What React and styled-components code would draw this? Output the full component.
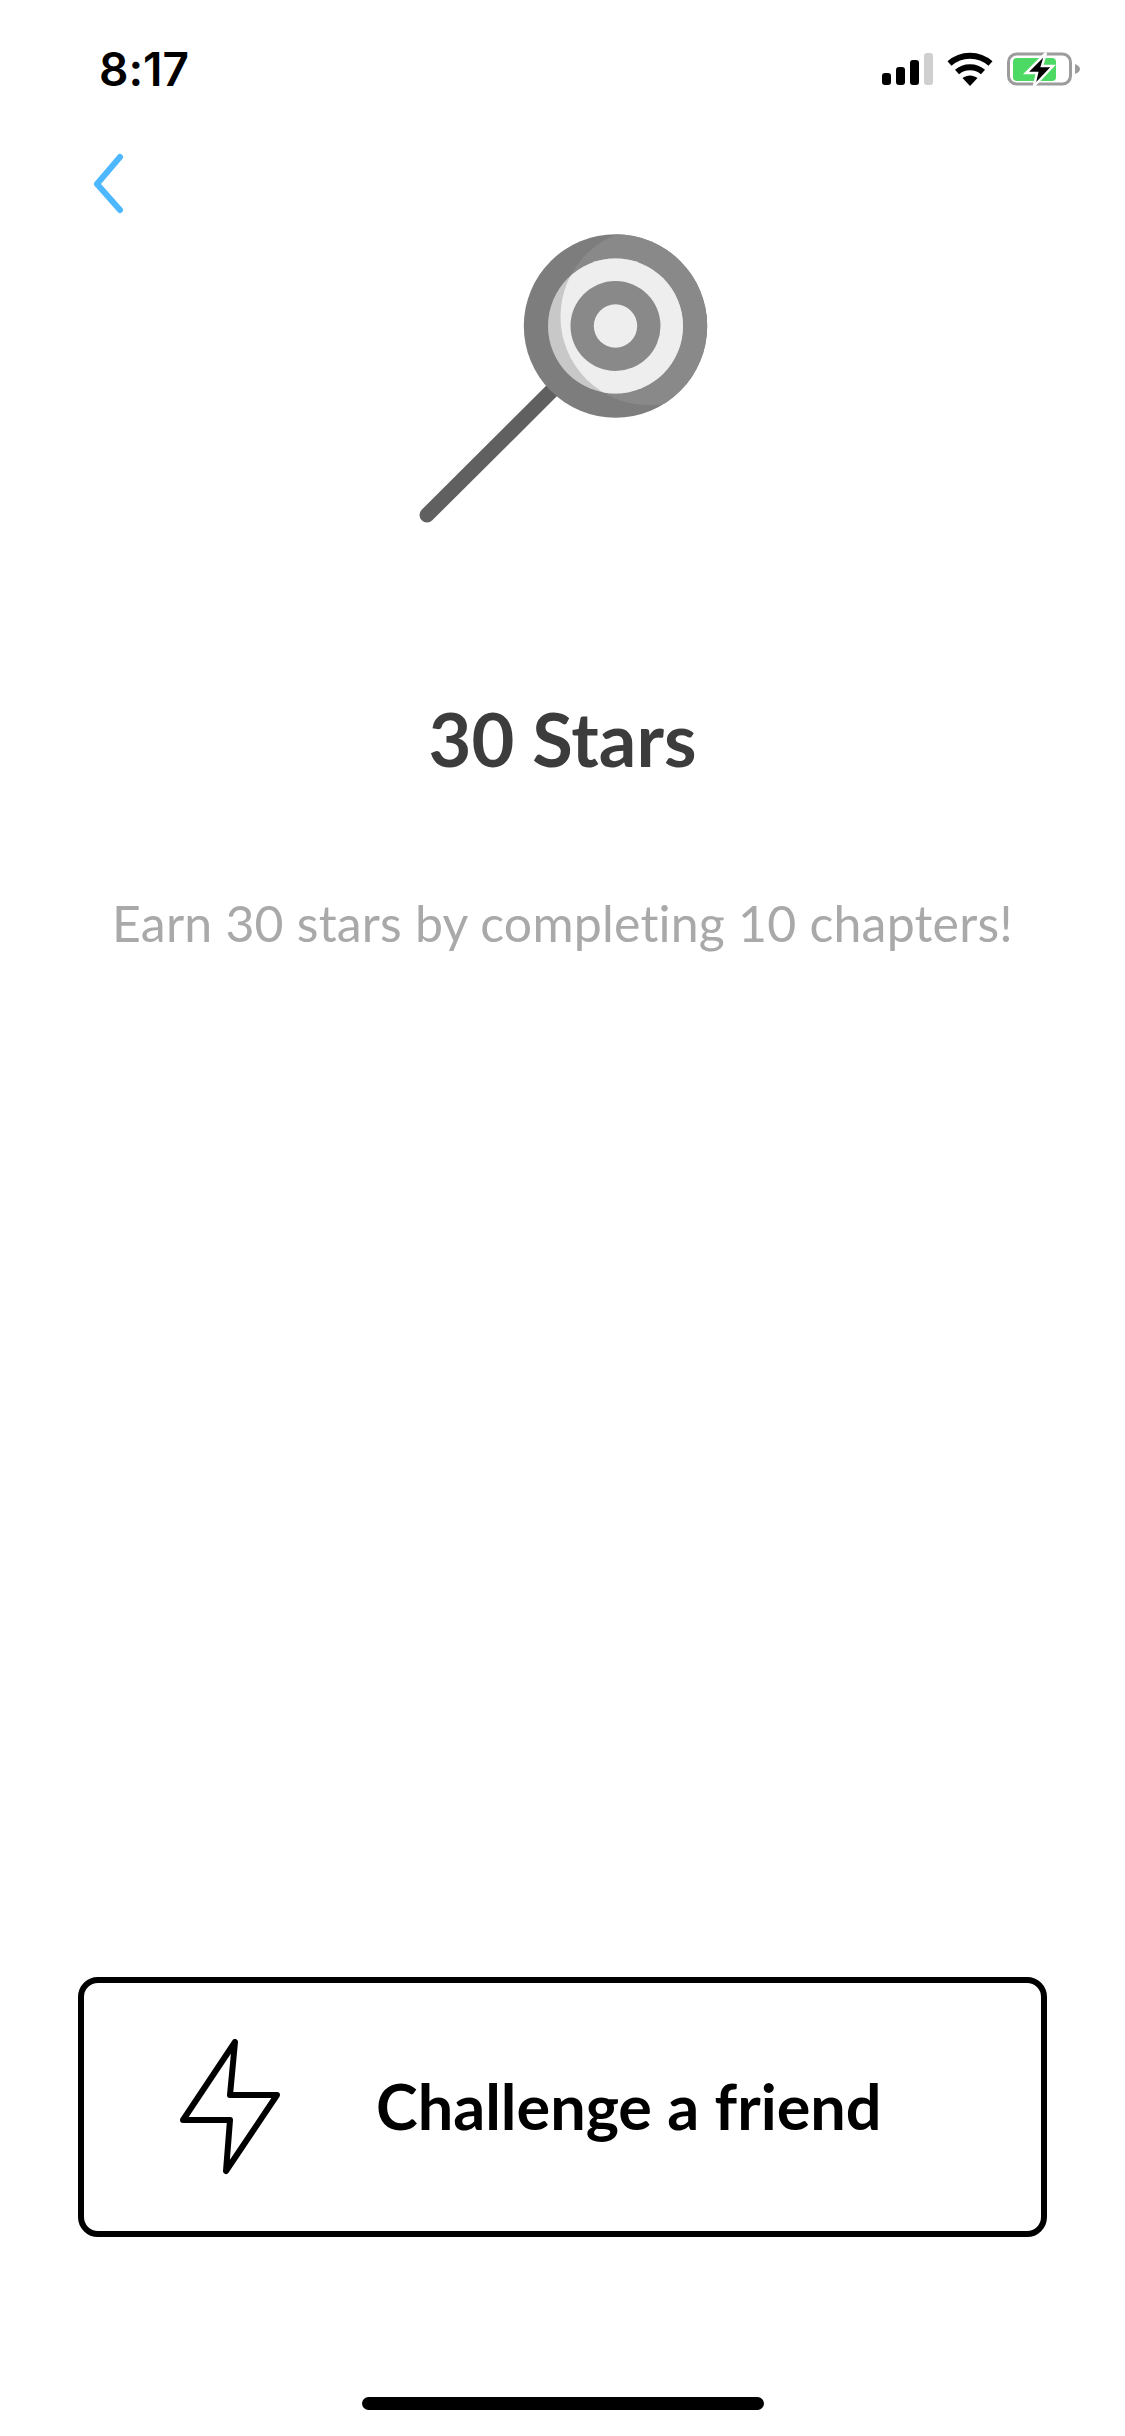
import React from 'react';
import styled, { createGlobalStyle } from 'styled-components';

const GlobalStyle = createGlobalStyle`
  html, body {
    margin: 0;
    padding: 0;
    background: #ffffff;
  }
`;

const Screen = styled.div`
  display: flex;
  flex-direction: column;
  width: 1125px;
  height: 2436px;
  overflow: hidden;
  background: #ffffff;
  font-family: Lato, "Liberation Sans", sans-serif;
  font-variant-ligatures: none;
`;

const StatusBar = styled.div`
  display: flex;
  justify-content: space-between;
  align-items: center;
  height: 70px;
  padding: 34px 44px 0 99px;
`;

const Time = styled.span`
  font-family: Inter, "Liberation Sans", sans-serif;
  font-size: 46px;
  font-weight: 600;
  letter-spacing: 0;
  color: #000000;
`;

const StatusIcons = styled.div`
  display: flex;
  align-items: center;
  gap: 14px;
`;

const Nav = styled.div`
  display: flex;
  height: 126px;
  padding: 49px 0 0 92px;
  box-sizing: border-box;
`;

const Hero = styled.div`
  display: flex;
  justify-content: center;
`;

const Title = styled.h1`
  margin: 169px 0 0;
  font-size: 74px;
  line-height: 80px;
  font-weight: 700;
  text-align: center;
  color: #3c3c3c;
`;

const Subtitle = styled.p`
  margin: 114px 0 0;
  font-size: 50px;
  line-height: 60px;
  font-weight: 400;
  letter-spacing: 0.2px;
  text-align: center;
  color: #a9a9a9;
`;

const ChallengeButton = styled.button`
  display: flex;
  align-items: center;
  gap: 96px;
  height: 260px;
  margin: auto 78px 0;
  padding: 0 0 0 96px;
  box-sizing: border-box;
  border: 6px solid #000000;
  border-radius: 20px;
  background: #ffffff;
  font-family: inherit;
  font-size: 63px;
  font-weight: 700;
  color: #000000;
`;

const ButtonLabel = styled.span`
  padding-bottom: 4px;
`;

const BoltIcon = styled.svg`
  flex: none;
  width: 100px;
  height: 136px;
`;

const HomeBar = styled.div`
  align-self: center;
  flex: none;
  width: 402px;
  height: 13px;
  margin: 160px 0 26px;
  border-radius: 7px;
  background: #000000;
`;

const Signal = () => (
  <svg width="51" height="32" viewBox="0 0 51 32">
    <rect x="0" y="20" width="9" height="12" rx="3" fill="#000" />
    <rect x="14" y="14" width="9" height="18" rx="3" fill="#000" />
    <rect x="28" y="7" width="9" height="25" rx="3" fill="#000" />
    <rect x="42" y="0" width="9" height="32" rx="3" fill="#cfcfcf" />
  </svg>
);

const Wifi = () => (
  <svg width="46" height="34" viewBox="0 0 46 34">
    <path d="M2.5 11.5C14 1 32 1 43.5 11.5" fill="none" stroke="#000" strokeWidth="6" />
    <path d="M10 20C17 13.5 29 13.5 36 20" fill="none" stroke="#000" strokeWidth="6" />
    <path d="M15.5 26C20 22.5 26 22.5 30.5 26L23 34Z" fill="#000" />
  </svg>
);

const Battery = () => (
  <svg width="74" height="35" viewBox="0 0 74 35">
    <rect x="1.5" y="2" width="62" height="30" rx="8" fill="none" stroke="#9c9c9c" strokeWidth="3" />
    <rect x="6" y="6" width="43" height="23" rx="4" fill="#4cd964" />
    <path d="M68 12C71 13 73 15 73 17C73 19 71 21 68 22Z" fill="#9c9c9c" />
    <path d="M39 1L19 21H30L27 34L46 14H35Z" fill="#000" stroke="#fff" strokeWidth="2.5" />
  </svg>
);

const BackChevron = () => (
  <svg width="34" height="62" viewBox="0 0 34 62">
    <path d="M28 4L5 31L28 57" fill="none" stroke="#4db8ff" strokeWidth="6" strokeLinecap="round" strokeLinejoin="round" />
  </svg>
);

const Lollipop = () => (
  <svg width="300" height="300" viewBox="412.5 230 300 300">
    <defs>
      <clipPath id="shine">
        <circle cx="648.5" cy="316.7" r="88.5" />
      </clipPath>
    </defs>
    <path d="M426.5 515L565 377" stroke="#606060" strokeWidth="15" strokeLinecap="round" />
    <circle cx="615" cy="326" r="91.7" fill="#7d7d7d" />
    <circle cx="615" cy="326" r="91.7" fill="#898989" clipPath="url(#shine)" />
    <circle cx="615" cy="326" r="67.5" fill="#c8c8c8" />
    <circle cx="615" cy="326" r="67.5" fill="#eeeeee" clipPath="url(#shine)" />
    <circle cx="615" cy="326" r="45" fill="#898989" />
    <circle cx="615" cy="326" r="21.7" fill="#eeeeee" />
  </svg>
);

const Bolt = () => (
  <BoltIcon viewBox="0 0 100 136">
    <path d="M55 3L50 56H97L46 132L50 81H3Z" fill="none" stroke="#000" strokeWidth="6" strokeLinejoin="round" />
  </BoltIcon>
);

const App = () => (
  <Screen>
    <GlobalStyle />
    <StatusBar>
      <Time>8:17</Time>
      <StatusIcons>
        <Signal />
        <Wifi />
        <Battery />
      </StatusIcons>
    </StatusBar>
    <Nav>
      <BackChevron />
    </Nav>
    <Hero>
      <Lollipop />
    </Hero>
    <Title>30 Stars</Title>
    <Subtitle>Earn 30 stars by completing 10 chapters!</Subtitle>
    <ChallengeButton>
      <Bolt />
      <ButtonLabel>Challenge a friend</ButtonLabel>
    </ChallengeButton>
    <HomeBar />
  </Screen>
);

export default App;
